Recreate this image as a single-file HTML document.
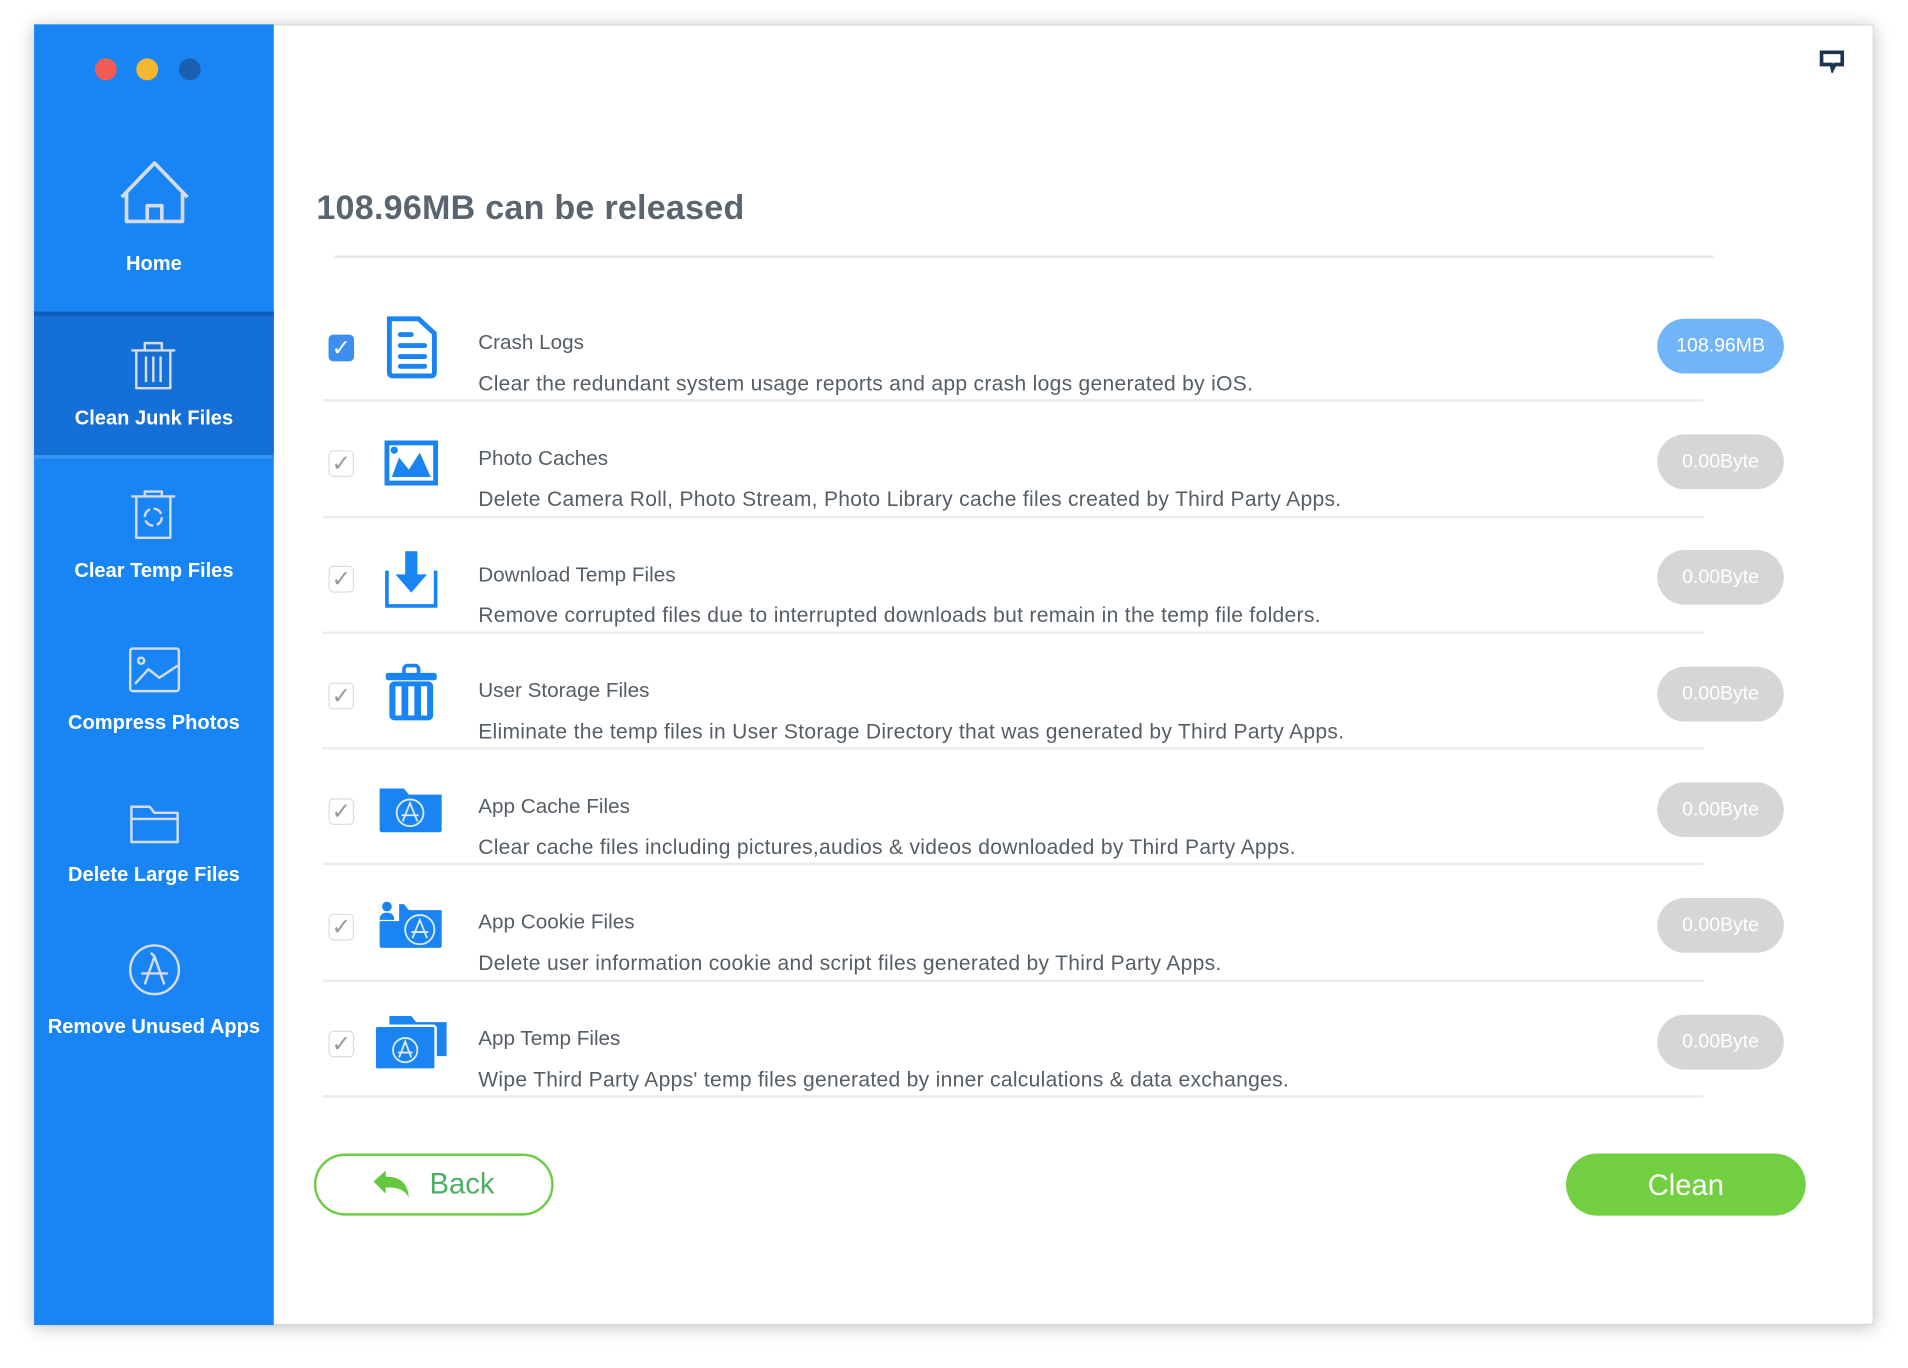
<!DOCTYPE html>
<html><head><meta charset="utf-8"><style>
html,body{margin:0;padding:0;background:#fff;width:1908px;height:1368px;overflow:hidden;font-family:"Liberation Sans",sans-serif}
#s{position:absolute;left:0;top:0;width:1568px;height:1124px;transform:scale(1.2168);transform-origin:0 0}
.a{position:absolute}
.win{left:28px;top:20px;width:1512px;height:1069px;background:#fff;box-shadow:0 2px 14px rgba(0,0,0,.25);border:1px solid #d8d8d8;box-sizing:border-box}
.side{left:28px;top:20px;width:197px;height:1069px;background:#1985f5}
.sel{left:28px;top:256px;width:197px;height:121px;background:#146fd6;border-top:4px solid #0f5fb8;box-sizing:border-box;border-bottom:3px solid #3a95f0}
.dot{width:18px;height:18px;border-radius:50%;top:48px}
.lab{width:197px;left:28px;text-align:center;color:#fff;font-weight:bold;font-size:16.5px}
.t{left:393px;font-size:17px;color:#555e66;white-space:nowrap}
.d{font-size:17.3px;letter-spacing:0.25px}
.ln{left:265px;width:1135px;height:2px;background:#ececec}
.cb{left:270px;width:21px;height:22px;border:1px solid #ddd;border-radius:4px;box-sizing:border-box;background:#fff;color:#999;font-size:19px;text-align:center;line-height:21px}
.pill{left:1362px;width:104px;height:45px;border-radius:23px;background:#d6d6d6;color:#fff;font-size:16px;text-align:center;line-height:45px}
</style></head><body><div id="s">
<div class="a win"></div>
<div class="a side"></div>
<div class="a sel"></div>
<div class="a dot" style="left:78px;background:#f25a55"></div>
<div class="a dot" style="left:112px;background:#f5b830"></div>
<div class="a dot" style="left:147px;background:#1a5fb0"></div>
<svg class="a" style="left:28px;top:120px" width="197" height="740" fill="none" stroke="#d6dce6" stroke-width="3" stroke-linejoin="round">
<path d="M72 42 L99 14 L126 42 M76 38 V62 H122 V38 M93 62 V49 H105 V62"/>
<g stroke-width="2"><path d="M80 168 H116 M91 168 V162 H105 V168 M84 168 V199 H112 V168 M92 173 V194 M98 173 V194 M104 173 V194"/>
<path d="M80 288 H116 M91 288 V284 H105 V288 M84 288 V322 H112 V288"/><circle cx="98" cy="305" r="7" stroke-dasharray="8 3"/>
<rect x="79" y="413" width="40" height="35" rx="2"/><circle cx="88" cy="423" r="2.5"/><path d="M83 442 L94 430 L103 437 L118 427"/>
<path d="M80 543 H95 L99 548 H118 V572 H80 Z M80 553 H118"/>
<circle cx="99" cy="677" r="20"/><path d="M91 689 L99 666 L107 689 M88 680 H110 M96 663 L99 666"/></g>
</svg>
<div class="a lab" style="top:208px">Home</div>
<div class="a lab" style="top:335px">Clean Junk Files</div>
<div class="a lab" style="top:460px">Clear Temp Files</div>
<div class="a lab" style="top:585px">Compress Photos</div>
<div class="a lab" style="top:710px">Delete Large Files</div>
<div class="a lab" style="top:835px">Remove Unused Apps</div>
<svg class="a" style="left:1494px;top:40px" width="24" height="20"><path d="M3 3 H20 V13 H14 L12 17 L11 13 H3 Z" fill="none" stroke="#1d3550" stroke-width="3"/></svg>
<div class="a" style="left:260px;top:155px;font-size:28px;font-weight:bold;color:#5a6570;letter-spacing:0.2px">108.96MB can be released</div>
<div class="a" style="left:275px;top:210px;width:1133px;height:2px;background:#e8e8e8"></div>

<div class="a t" style="top:272px">Crash Logs</div><div class="a t d" style="top:305px">Clear the redundant system usage reports and app crash logs generated by iOS.</div><div class="a ln" style="top:328px"></div>
<div class="a t" style="top:367px">Photo Caches</div><div class="a t d" style="top:400px">Delete Camera Roll, Photo Stream, Photo Library cache files created by Third Party Apps.</div><div class="a ln" style="top:424px"></div>
<div class="a t" style="top:463px">Download Temp Files</div><div class="a t d" style="top:495px">Remove corrupted files due to interrupted downloads but remain in the temp file folders.</div><div class="a ln" style="top:519px"></div>
<div class="a t" style="top:558px">User Storage Files</div><div class="a t d" style="top:591px">Eliminate the temp files in User Storage Directory that was generated by Third Party Apps.</div><div class="a ln" style="top:614px"></div>
<div class="a t" style="top:653px">App Cache Files</div><div class="a t d" style="top:686px">Clear cache files including pictures,audios &amp; videos downloaded by Third Party Apps.</div><div class="a ln" style="top:709px"></div>
<div class="a t" style="top:748px">App Cookie Files</div><div class="a t d" style="top:781px">Delete user information cookie and script files generated by Third Party Apps.</div><div class="a ln" style="top:805px"></div>
<div class="a t" style="top:844px">App Temp Files</div><div class="a t d" style="top:877px">Wipe Third Party Apps' temp files generated by inner calculations &amp; data exchanges.</div><div class="a ln" style="top:900px"></div>

<div class="a cb" style="top:275px;background:#3d8ef0;border-color:#3d8ef0;color:#fff">✓</div>
<div class="a cb" style="top:370px">✓</div><div class="a cb" style="top:465px">✓</div><div class="a cb" style="top:561px">✓</div><div class="a cb" style="top:656px">✓</div><div class="a cb" style="top:751px">✓</div><div class="a cb" style="top:847px">✓</div>

<div class="a pill" style="top:262px;background:#72b4f8">108.96MB</div>
<div class="a pill" style="top:357px">0.00Byte</div><div class="a pill" style="top:452px">0.00Byte</div><div class="a pill" style="top:548px">0.00Byte</div><div class="a pill" style="top:643px">0.00Byte</div><div class="a pill" style="top:738px">0.00Byte</div><div class="a pill" style="top:834px">0.00Byte</div>

<svg class="a" style="left:300px;top:250px" width="80" height="650">
<g fill="#1a84f2">
<path d="M20 12 H44 L57 24 V56 Q57 59 54 59 H23 Q20 59 20 56 Z" fill="none" stroke="#1a84f2" stroke-width="4"/>
<rect x="27" y="23" width="13" height="4" rx="2"/><rect x="27" y="32" width="24" height="4" rx="2"/><rect x="27" y="41" width="24" height="4" rx="2"/><rect x="27" y="49" width="24" height="4" rx="2"/>
<rect x="16" y="112" width="44" height="37"/><rect x="20" y="116" width="36" height="29" fill="#fff"/><path d="M22 142 L28 126 L36 136 L45 122 L54 142 Z"/><circle cx="24" cy="120" r="3"/>
<rect x="33" y="203" width="10" height="20"/><path d="M25 222 H51 L38 237 Z"/><path d="M18 219 V248 H58 V219" fill="none" stroke="#1a84f2" stroke-width="3"/>
<rect x="17" y="303" width="42" height="6" rx="2"/><rect x="32" y="297" width="12" height="8" rx="3" fill="none" stroke="#1a84f2" stroke-width="3"/>
<rect x="20" y="310" width="36" height="32" rx="4"/><g fill="#fff"><rect x="25" y="314" width="5" height="24"/><rect x="35.5" y="314" width="5" height="24"/><rect x="46" y="314" width="5" height="24"/></g>
<path d="M12 398 H32 L36 403 H63 V432 Q63 434 61 434 H14 Q12 434 12 432 Z"/>
<path d="M12 493 H32 L36 498 H63 V527 Q63 529 61 529 H14 Q12 529 12 527 Z"/><rect x="12" y="491" width="16" height="16" fill="#fff"/><circle cx="18" cy="495" r="4"/><path d="M12 506 Q12 500 18 500 Q24 500 24 506 Z"/>
<path d="M20 585 H38 L42 590 H67 V618 H20 Z"/><rect x="8" y="593" width="50" height="36" rx="2" stroke="#fff" stroke-width="2"/>
</g>
<g fill="none" stroke="#fff" stroke-width="1.5" opacity=".85">
<circle cx="37" cy="418" r="11"/><path d="M31 425 L37 410 L43 425 M30 420 H44"/>
<circle cx="45" cy="514" r="12"/><path d="M39 521 L45 506 L51 521 M38 516 H52"/>
<circle cx="33" cy="613" r="10"/><path d="M28 619 L33 606 L38 619 M27 615 H39"/>
</g></svg>

<div class="a" style="left:258px;top:948px;width:197px;height:51px;border:2px solid #6dcd45;border-radius:26px;box-sizing:border-box"></div>
<svg class="a" style="left:305px;top:960px" width="36" height="28"><path d="M2 11 L12 2 V7 Q30 7 31 24 Q26 15 12 16 V21 Z" fill="#63c83c"/></svg>
<div class="a" style="left:353px;top:960px;font-size:24px;color:#4caf62">Back</div>
<div class="a" style="left:1287px;top:948px;width:197px;height:51px;background:#72cf42;border-radius:26px;color:#fff;font-size:24px;text-align:center;line-height:53px">Clean</div>
</div></body></html>
